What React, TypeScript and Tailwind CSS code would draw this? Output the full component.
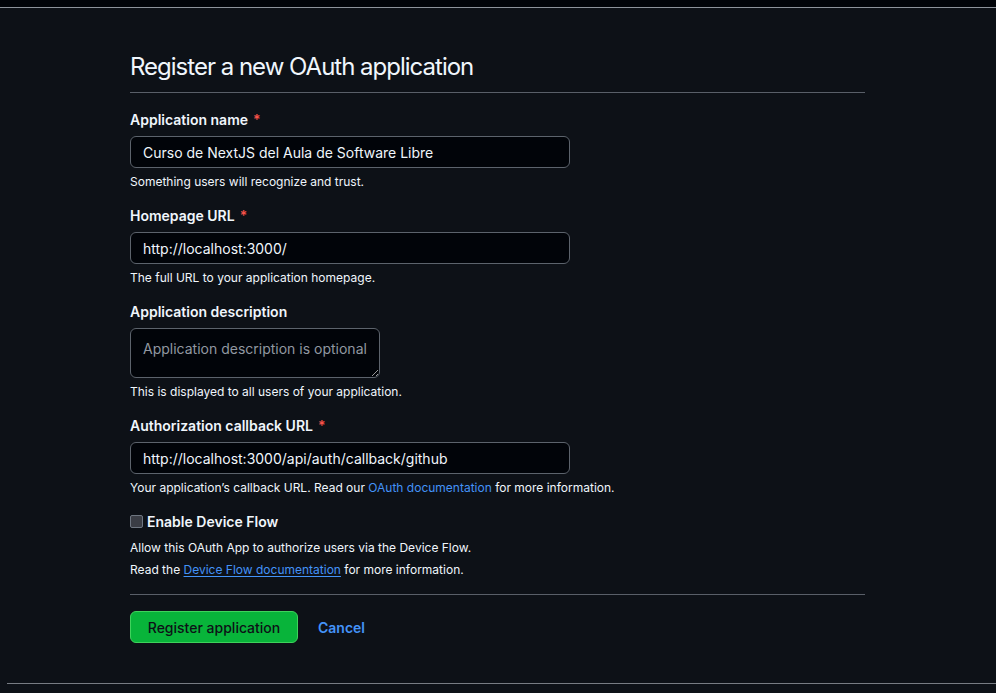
import React from 'react'

const font = { fontFamily: 'Inter, "Noto Sans", sans-serif' }

function Label({ children, required }: { children: React.ReactNode; required?: boolean }) {
  return (
    <div className="text-[14px] leading-[21px] font-semibold text-[#f0f6fc]">
      {children}
      {required && <span className="ml-[5px] text-[#f85149]">*</span>}
    </div>
  )
}

function Note({ children }: { children: React.ReactNode }) {
  return <p className="mt-[5px] text-[12px] leading-[18px] text-[#f0f6fc]">{children}</p>
}

function TextField({ value }: { value: string }) {
  return (
    <input
      readOnly
      value={value}
      className="mt-[6px] block h-[32px] w-[440px] rounded-[6px] border border-[#5c636c] bg-[#010409] px-3 text-[14px] text-[#f0f6fc] outline-none"
    />
  )
}

export default function App() {
  return (
    <div className="min-h-[693px] bg-[#0d1117] text-[#f0f6fc]" style={font}>
      <div className="h-[8px] border-b border-[#8d939b] bg-[#010409]" />

      <div className="w-[735px] ml-[130px]">
        <h1 className="mt-[41px] border-b border-[#595f68] pb-[7px] text-[24px] leading-[36px] font-normal tracking-[-1px] text-[#f0f6fc]">
          Register a new OAuth application
        </h1>

        <div className="mt-[16px]">
          <Label required>Application name</Label>
          <TextField value="Curso de NextJS del Aula de Software Libre" />
          <Note>Something users will recognize and trust.</Note>
        </div>

        <div className="mt-[14px]">
          <Label required>Homepage URL</Label>
          <TextField value="http://localhost:3000/" />
          <Note>The full URL to your application homepage.</Note>
        </div>

        <div className="mt-[14px]">
          <Label>Application description</Label>
          <textarea
            readOnly
            placeholder="Application description is optional"
            className="mt-[6px] block h-[50px] w-[250px] rounded-[6px] border border-[#5c636c] bg-[#010409] px-3 pt-[10px] text-[14px] leading-[20px] text-[#f0f6fc] placeholder:text-[#9198a1] outline-none"
          />
          <Note>This is displayed to all users of your application.</Note>
        </div>

        <div className="mt-[14px]">
          <Label required>Authorization callback URL</Label>
          <TextField value="http://localhost:3000/api/auth/callback/github" />
          <Note>
            Your application’s callback URL. Read our{' '}
            <span className="text-[#4493f8]">OAuth documentation</span> for more information.
          </Note>
        </div>

        <div className="mt-[14px]">
          <div className="flex items-center gap-[4px]">
            <span className="inline-block h-[13px] w-[13px] rounded-[2px] border border-[#6e7681] bg-[#3a3d45]" />
            <span className="text-[14px] leading-[21px] font-semibold">Enable Device Flow</span>
          </div>
          <p className="mt-[5px] text-[12px] leading-[22px]">
            Allow this OAuth App to authorize users via the Device Flow.
          </p>
          <p className="text-[12px] leading-[22px]">
            Read the{' '}
            <span className="text-[#4493f8] underline underline-offset-2">Device Flow documentation</span>{' '}
            for more information.
          </p>
        </div>

        <div className="mt-[13px] border-t border-[#595f68] pt-[16px] flex items-center gap-[20px]">
          <button className="h-[32px] w-[168px] rounded-[6px] border border-[#3fd25c] bg-[#08b43a] text-[14px] font-medium text-[#0d1117]">
            Register application
          </button>
          <span className="text-[14px] font-semibold text-[#4493f8]">Cancel</span>
        </div>
      </div>

      <div className="ml-[7px] mt-[40px] border-t border-[#777c83]" />
    </div>
  )
}
